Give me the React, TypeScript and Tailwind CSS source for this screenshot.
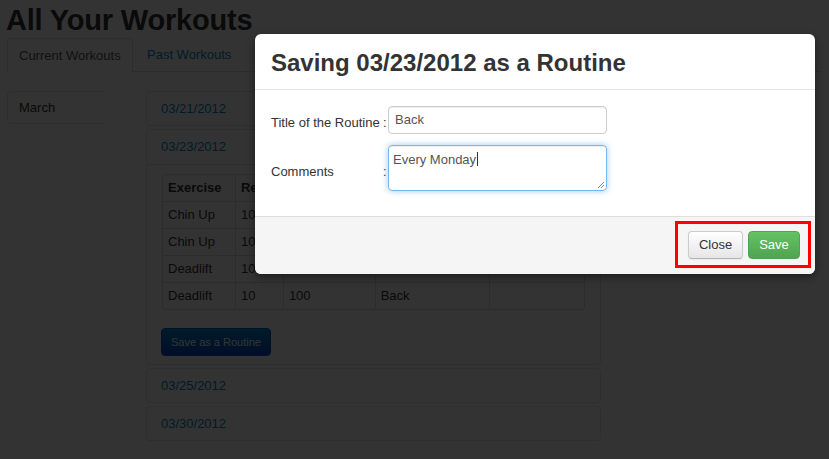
import React from "react";

const rows = [
  ["Chin Up", "10", "50", "Back", ""],
  ["Chin Up", "10", "50", "Back", ""],
  ["Deadlift", "10", "100", "Back", ""],
  ["Deadlift", "10", "100", "Back", ""],
];

const widths = ["w-[73px]", "w-[48px]", "w-[92px]", "w-[115px]", "w-[95px]"];

function Group({ date }: { date: string }) {
  return (
    <div className="mb-[3px] h-[35px] rounded-[4px] border border-[#e5e5e5] px-[14px] flex items-center">
      <span className="text-[13px] leading-[18px] text-[#0088cc]">{date}</span>
    </div>
  );
}

export default function App() {
  return (
    <div className="relative w-[829px] h-[459px] overflow-hidden bg-white text-[#333] font-['Liberation_Sans',Arial,sans-serif]">
      {/* underlying page */}
      <div className="px-[7px]">
        <h1 className="-ml-[1px] h-[38px] pt-[1px] text-[29px] leading-[38px] font-bold tracking-[-0.2px] text-[#333]">
          All Your Workouts
        </h1>
        <ul className="flex h-[34px] border-b border-[#ddd] text-[13px] leading-[18px]">
          <li className="h-[34px] w-[126px] rounded-t-[4px] border border-[#ddd] border-b-white bg-white px-[11px] pt-[8px] text-[#555]">
            Current Workouts
          </li>
          <li className="ml-[2px] h-[33px] px-[12px] pt-[8px] text-[#0088cc]">Past Workouts</li>
        </ul>
        <div className="mt-[19px] flex">
          <div className="h-[33px] w-[98px] rounded-l-[4px] border-y border-l border-[#e5e5e5] px-[11px] flex items-center text-[13px] text-[#333]">
            March
          </div>
          <div className="ml-[41px] w-[455px]">
            <Group date="03/21/2012" />
            <div className="mb-[3px] rounded-[4px] border border-[#e5e5e5]">
              <div className="h-[35px] border-b border-[#e5e5e5] px-[14px] flex items-center">
                <span className="text-[13px] leading-[18px] text-[#0088cc]">03/23/2012</span>
              </div>
              <div className="px-[15px] pt-[9px] pb-[8px]">
                <table className="border-separate border-spacing-0 rounded-[4px] border-r border-b border-[#ddd] text-[13px] leading-[18px]">
                  <thead>
                    <tr>
                      {["Exercise", "Reps", "Weight", "Muscle Group", "Notes"].map((h, i) => (
                        <th
                          key={h}
                          className={`${widths[i]} border-l border-t border-[#ddd] px-[5px] py-[4px] text-left font-bold ${i === 0 ? "rounded-tl-[4px]" : ""}`}
                        >
                          {h}
                        </th>
                      ))}
                    </tr>
                  </thead>
                  <tbody>
                    {rows.map((r, ri) => (
                      <tr key={ri}>
                        {r.map((c, ci) => (
                          <td
                            key={ci}
                            className={`h-[27px] border-l border-t border-[#ddd] px-[5px] py-[4px] ${ri === 3 && ci === 0 ? "rounded-bl-[4px]" : ""}`}
                          >
                            {c}
                          </td>
                        ))}
                      </tr>
                    ))}
                  </tbody>
                </table>
                <button className="mt-[18px] -ml-[1px] h-[28px] rounded-[4px] border border-[#0055cc] bg-gradient-to-b from-[#0088cc] to-[#0044cc] px-[9px] text-[11px] text-white">
                  Save as a Routine
                </button>
              </div>
            </div>
            <Group date="03/25/2012" />
            <Group date="03/30/2012" />
          </div>
        </div>
      </div>

      {/* backdrop */}
      <div className="absolute inset-0 bg-black/80" />

      {/* modal */}
      <div className="absolute left-[255px] top-[34px] w-[560px] h-[240px] rounded-[6px] bg-white shadow-[0_3px_8px_rgba(0,0,0,0.45)] flex flex-col">
        <div className="h-[56px] shrink-0 border-b border-[#e5e5e5] px-[16px] pt-[15px]">
          <h3 className="text-[24px] leading-[27px] font-bold text-[#333]">Saving 03/23/2012 as a Routine</h3>
        </div>
        <div className="h-[126px] shrink-0 pl-[16px] pt-[16px]">
          <div className="grid grid-cols-[112px_5px_219px] gap-y-[11px] text-[13px] leading-[18px] text-[#333]">
            <div className="mt-[8px]">Title of the Routine</div>
            <div className="mt-[8px]">:</div>
            <div className="h-[28px] rounded-[4px] border border-[#ccc] shadow-[inset_0_1px_1px_rgba(0,0,0,0.075)] pl-[6px] pt-[4px] text-[13px] leading-[18px] text-[#555]">
              Back
            </div>
            <div className="mt-[18px]">Comments</div>
            <div className="mt-[18px]">:</div>
            <div className="relative h-[46px] rounded-[4px] border border-[rgba(82,168,236,0.8)] shadow-[inset_0_1px_1px_rgba(0,0,0,0.075),0_0_6px_rgba(82,168,236,0.6)] pl-[4px] pt-[4px] text-[13px] leading-[18px] text-[#555]">
              <span>Every Monday</span>
              <span className="inline-block h-[14px] w-[1px] translate-y-[2px] bg-[#333] ml-[1px]" />
              <svg className="absolute right-[2px] bottom-[2px]" width="7" height="7" viewBox="0 0 7 7">
                <path d="M1 7 L7 1 M4 7 L7 4" stroke="#888" strokeWidth="1" />
              </svg>
            </div>
          </div>
        </div>
        <div className="flex-1 rounded-b-[6px] border-t border-[#ddd] bg-[#f5f5f5] flex justify-end items-start pt-[14px] pr-[15px]">
          <button className="h-[28px] w-[55px] rounded-[4px] border border-[#ccc] border-b-[#b3b3b3] bg-gradient-to-b from-white to-[#e6e6e6] text-[13px] text-[#333] shadow-[inset_0_1px_0_rgba(255,255,255,0.2),0_1px_2px_rgba(0,0,0,0.05)]">
            Close
          </button>
          <button className="ml-[5px] h-[28px] w-[52px] rounded-[4px] border border-[#51a351] bg-gradient-to-b from-[#62c462] to-[#51a351] text-[13px] text-white">
            Save
          </button>
        </div>
      </div>

      {/* red annotation box */}
      <div className="absolute left-[675px] top-[221px] w-[136px] h-[47px] border-[3px] border-[#ff0000]" />
    </div>
  );
}
